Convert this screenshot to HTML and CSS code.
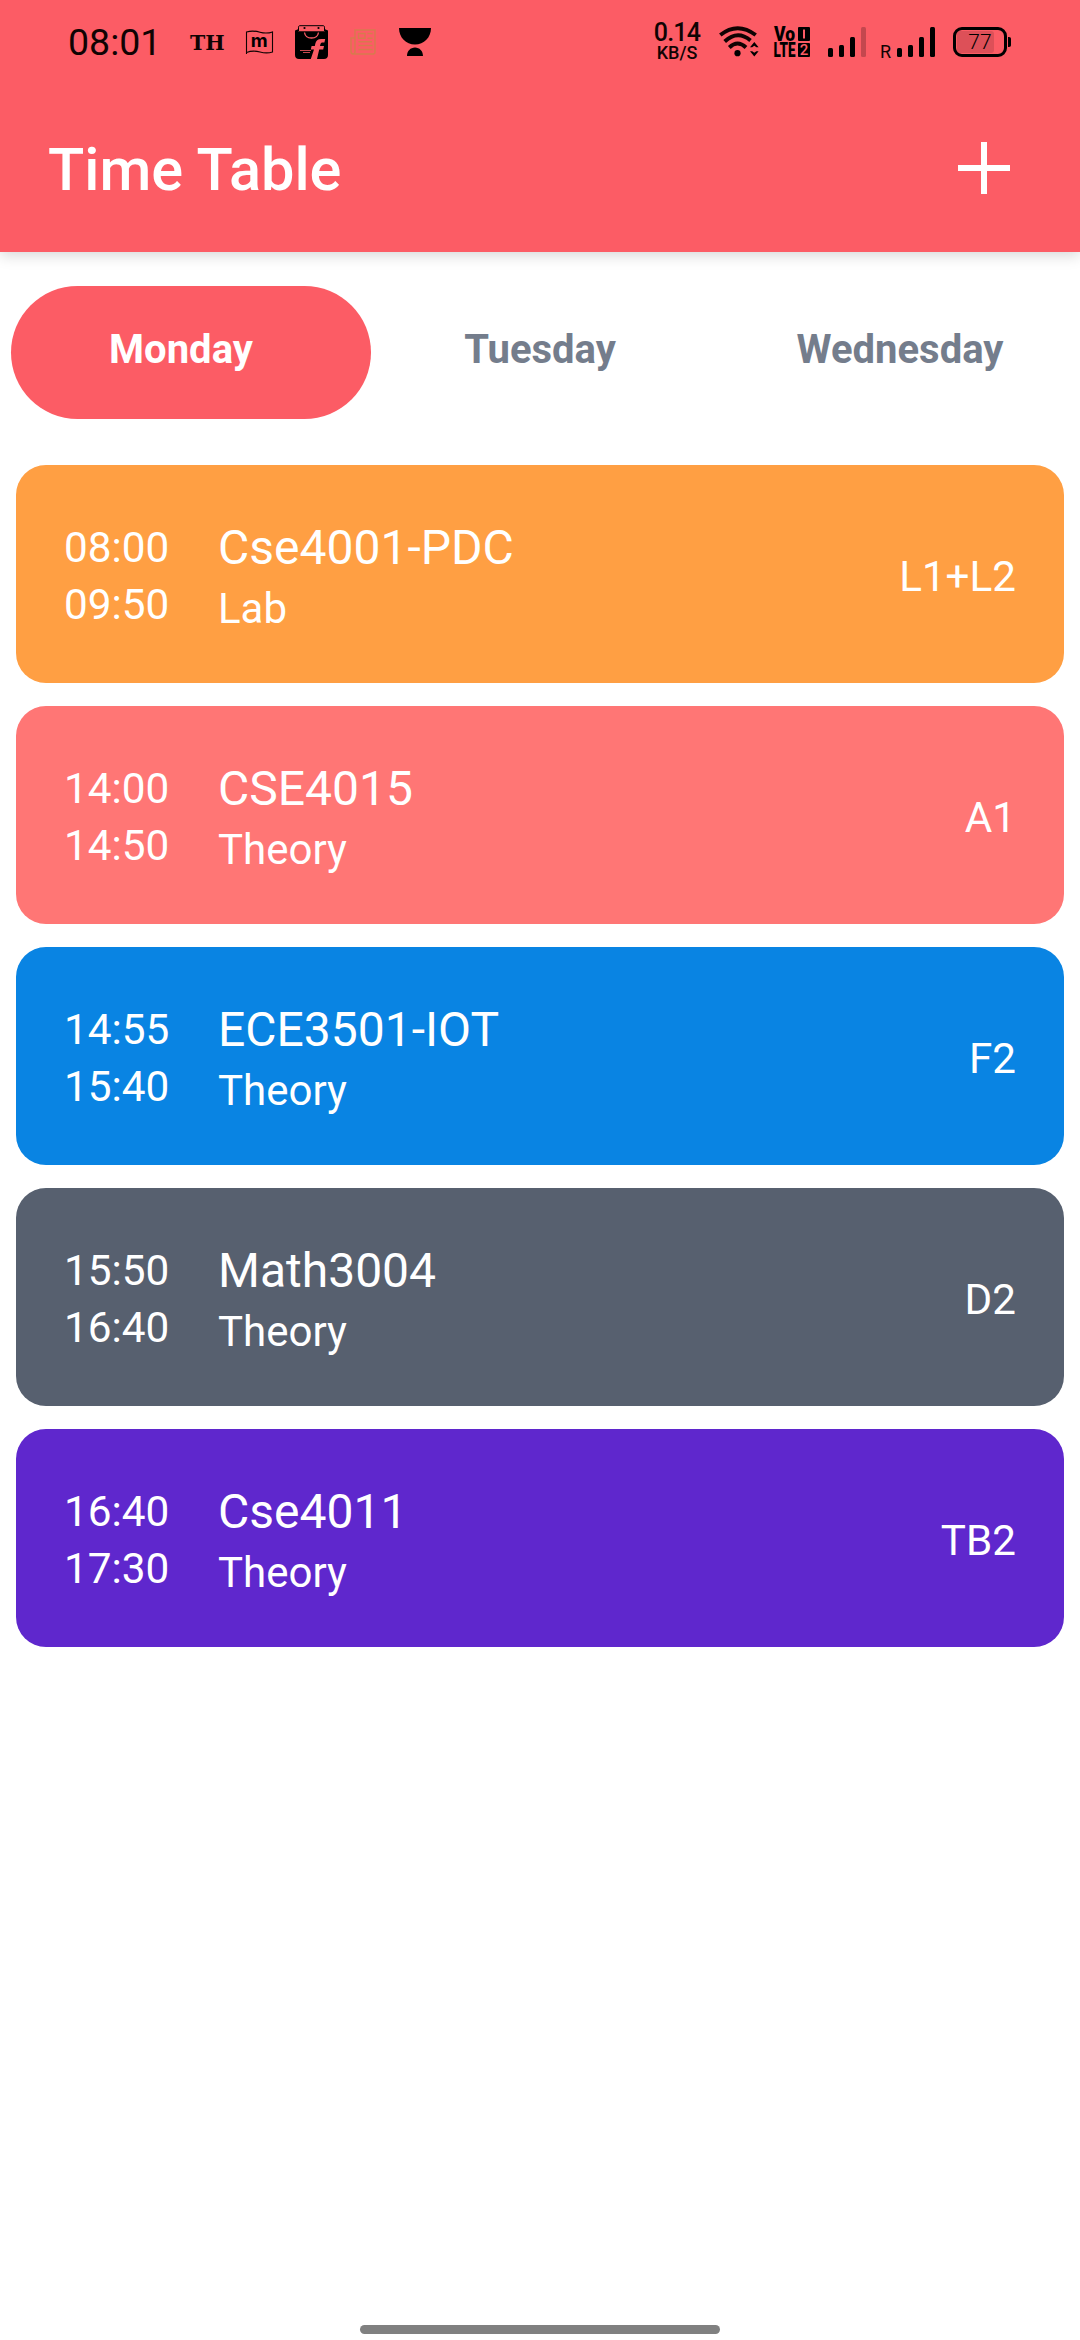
FILE: index.html
```html
<!DOCTYPE html>
<html lang="en">
<head>
<meta charset="utf-8">
<title>Time Table</title>
<link rel="stylesheet" href="styles.css">
</head>
<body>
<div class="screen">
  <header class="header">
    <div class="status">
      <div class="status-left">
        <span class="clock">08:01</span>
        <span class="th">TH</span>
        <svg class="flag" width="29" height="25" viewBox="0 0 29 25">
          <path d="M1.500 24V2C6 .6 10 .8 15 2.200s8 1.300 12.500-.3V22c-4.500 1.400-8 1.200-12.500 0S6 20.800 1.500 22.400" fill="none" stroke="#100303" stroke-width="1.100"/>
          <text x="14.300" y="17" text-anchor="middle" class="flag-m">m</text>
        </svg>
        <svg class="bag" width="33" height="34" viewBox="0 0 33 34">
          <path d="M3.500 6V2.200C3.500 1.200 4 .7 5 .7h23c1 0 1.500.5 1.500 1.500V6" fill="none" stroke="#000" stroke-width="1"/>
          <circle cx="9.500" cy="3" r="1.100"/><circle cx="23.500" cy="3" r="1.100"/>
          <path d="M0 5.500l3-1.200v1.900h27V4.300l3 1.200V30c0 2.500-1.500 4-4 4h-7l2.200-9.500h4l.8-3.500h-4l.4-1.700c.3-1.300 1-1.800 2.300-1.800h1.700l.8-3.500h-4c-3.500 0-5.200 1.700-5.900 4.700l-.5 2.300h-3.200l-.8 3.500h3.200L15.800 34H4c-2.500 0-4-1.500-4-4z"/>
          <path d="M9.500 7.500c.5 3.500 3.500 5.500 7 5.500s6.500-2 7-5.500" fill="none" stroke="#fc5c65" stroke-width="1.300"/>
          <path d="M5 25.500h11M8 27.500h7" stroke="#fc5c65" stroke-width=".8"/>
        </svg>
        <svg class="news" width="26" height="26" viewBox="0 0 26 26" fill="none" stroke="#d67b4d" stroke-width="1.400">
          <path d="M5 9H1v13.500C1 24.200 2 25 3.200 25H23c1.300 0 2-.8 2-2V1H5v21.500c0 1.500-.7 2.500-1.800 2.500"/>
          <path d="M8.500 4.500h6.500v4.800H8.500zM17.500 4.500h5M17.500 9.300h5M8.500 12.800h13.500M8.500 16.500h14M8.500 20.500h14"/>
        </svg>
        <svg class="cup" width="32" height="28" viewBox="0 0 32 28">
          <path d="M0 0h32c0 9.500-7 16.500-16 16.500S0 9.500 0 0zM8 28c0-5 3.500-8.500 8-8.500s8 3.500 8 8.500z"/>
        </svg>
      </div>
      <div class="status-right">
        <div class="speed"><span class="rate">0.14</span><span class="unit">KB/S</span></div>
        <svg class="wifi" width="41" height="31" viewBox="0 0 41 31">
          <g fill="none" stroke="#100303" stroke-width="3.900">
            <path d="M1.300 9Q18.500-4.700 36.700 9"/>
            <path d="M5.700 15.500Q18.500 3.700 31.500 14.500"/>
            <path d="M10.300 21.500Q18.500 13.500 27 21.500"/>
          </g>
          <circle cx="18.500" cy="27.200" r="3.100"/>
          <path d="M31 21.200l4.300-5.200 4.300 5.200h-2.200l-2.100-1.500-2.100 1.500zM31 25.200h2.200l2.100 1.500 2.100-1.500h2.200l-4.300 5.200z"/>
        </svg>
        <svg class="volte" width="36" height="30" viewBox="0 0 36 30">
          <text x="0" y="14" textLength="21" lengthAdjust="spacingAndGlyphs" class="volte-text">Vo</text>
          <text x="-.5" y="30" textLength="22" lengthAdjust="spacingAndGlyphs" class="volte-text">LTE</text>
          <rect x="24" width="12" height="14" rx="1"/><rect x="24" y="16" width="12" height="14" rx="1"/>
          <path d="M30 2.500v9" stroke="#fc5c65" stroke-width="2"/>
          <text x="30" y="27.900" text-anchor="middle" class="sim">2</text>
        </svg>
        <svg class="signal" width="38" height="30" viewBox="0 0 38 30">
          <rect y="21" width="5" height="9" rx="1.500"/><rect x="11" y="18" width="5" height="12" rx="1.500"/><rect x="22" y="10" width="5" height="20" rx="1.500"/><rect x="33" width="5" height="30" rx="1.500" opacity=".22"/>
        </svg>
        <span class="roaming">R</span>
        <svg class="signal-2" width="38" height="30" viewBox="0 0 38 30">
          <rect y="21" width="5" height="9" rx="1.500"/><rect x="11" y="18" width="5" height="12" rx="1.500"/><rect x="22" y="10" width="5" height="20" rx="1.500"/><rect x="33" width="5" height="30" rx="1.500"/>
        </svg>
        <svg class="battery" width="58" height="30" viewBox="0 0 58 30">
          <rect x="4" y="4" width="37" height="22" rx="3" opacity=".12"/>
          <rect x="1.500" y="1.500" width="51" height="27" rx="7.500" fill="none" stroke="#000" stroke-width="3"/>
          <path d="M55 10h1c1.300 0 2 .7 2 2v6c0 1.300-.7 2-2 2h-1z"/>
          <text x="27" y="22.300" text-anchor="middle" class="level">77</text>
        </svg>
      </div>
    </div>
    <div class="appbar">
      <h1 class="title">Time Table</h1>
      <svg class="add" width="52" height="52" viewBox="0 0 52 52"><path d="M26 0v52M0 26h52" stroke="#fff" stroke-width="6"/></svg>
    </div>
  </header>
  <nav class="tabs">
    <div class="tab active">Monday</div>
    <div class="tab">Tuesday</div>
    <div class="tab">Wednesday</div>
  </nav>
  <main class="list">
    <article class="card orange">
      <div class="times"><span>08:00</span><span>09:50</span></div>
      <div class="info"><span class="course">Cse4001-PDC</span><span class="kind">Lab</span></div>
      <div class="slot">L1+L2</div>
    </article>
    <article class="card coral">
      <div class="times"><span>14:00</span><span>14:50</span></div>
      <div class="info"><span class="course">CSE4015</span><span class="kind">Theory</span></div>
      <div class="slot">A1</div>
    </article>
    <article class="card blue">
      <div class="times"><span>14:55</span><span>15:40</span></div>
      <div class="info"><span class="course">ECE3501-IOT</span><span class="kind">Theory</span></div>
      <div class="slot">F2</div>
    </article>
    <article class="card slate">
      <div class="times"><span>15:50</span><span>16:40</span></div>
      <div class="info"><span class="course">Math3004</span><span class="kind">Theory</span></div>
      <div class="slot">D2</div>
    </article>
    <article class="card purple">
      <div class="times"><span>16:40</span><span>17:30</span></div>
      <div class="info"><span class="course">Cse4011</span><span class="kind">Theory</span></div>
      <div class="slot">TB2</div>
    </article>
  </main>
  <div class="home-bar"></div>
</div>
</body>
</html>
```

FILE: styles.css
```css
* { box-sizing: border-box; }
body { margin: 0; background: #fff; font-family: Roboto, sans-serif; }
.screen { width: 1080px; height: 2340px; display: flex; flex-direction: column; overflow: hidden; }
.header { height: 252px; flex: none; background: #fc5c65; box-shadow: 0 3px 14px rgba(0, 0, 0, .17); }

.status { height: 84px; display: flex; justify-content: space-between; padding: 0 69px 0 68px; color: #100303; }
.status svg { display: block; flex: none; overflow: visible; }
.status-left, .status-right { display: flex; align-items: flex-start; }
.clock { width: 91px; margin-top: 20px; font-size: 37.500px; line-height: 44px; white-space: nowrap; }
.th { width: 36px; margin: 31px 0 0 31px; font: bold 20.500px/24px "DejaVu Serif", serif; }
.flag { margin: 30px 0 0 19px; }
.flag-m { font: 700 18.500px Inter, sans-serif; }
.bag { margin: 25px 0 0 21px; }
.news { margin: 29px 0 0 22px; }
.cup { margin: 28px 0 0 23px; }

.speed { width: 46px; margin-top: 22px; display: flex; flex-direction: column; align-items: center; }
.rate { font-weight: 500; font-size: 25px; line-height: 22px; letter-spacing: -.8px; white-space: nowrap; }
.unit { font-weight: 500; font-size: 18px; line-height: 18px; white-space: nowrap; }
.wifi { margin: 26px 0 0 19px; }
.volte { margin: 27px 0 0 14px; }
.volte-text { font: 900 19.500px Roboto, sans-serif; }
.sim { font: 500 15px Roboto, sans-serif; fill: #fc5c65; }
.signal { margin: 27px 0 0 18px; }
.roaming { width: 12px; margin: 42px 0 0 14px; font-size: 18px; line-height: 20px; }
.signal-2 { margin: 27px 0 0 5px; }
.battery { margin: 27px 0 0 18px; }
.level { font: 300 21px Roboto, sans-serif; }

.appbar { height: 168px; display: flex; align-items: center; justify-content: space-between; padding: 0 70px 0 48px; }
.title { margin: 4px 0 0; color: #fff; font-size: 59.500px; line-height: 70px; font-weight: 500; }
.add { display: block; }

.tabs { flex: none; display: grid; grid-template-columns: repeat(3, 360px); margin-top: 34px; height: 133px; }
.tab { display: flex; align-items: center; justify-content: center; padding-bottom: 6px; color: #747d8c; font-size: 40px; font-weight: 700; }
.tab.active { margin: 0 -11px 0 11px; padding-right: 20px; border-radius: 67px; background: #fc5c65; color: #fff; }

.list { display: flex; flex-direction: column; gap: 23px; padding: 46px 16px 0; }
.card { height: 218px; display: flex; align-items: center; padding: 0 48px; border-radius: 30px; color: #fff; }
.times { width: 106px; margin-right: 48px; padding-top: 4px; display: flex; flex-direction: column; font-size: 42.300px; line-height: 57px; white-space: nowrap; }
.info { flex: 1; display: flex; flex-direction: column; padding-top: 4px; }
.course { font-size: 48px; line-height: 64px; }
.kind { font-size: 42px; line-height: 57px; }
.slot { padding-top: 4px; font-size: 42.200px; }
.orange { background: #ff9f43; }
.coral { background: #ff7675; }
.blue { background: #0984e3; }
.slate { background: #57606f; }
.purple { background: #5f27cd; }

.home-bar { width: 360px; height: 9px; margin: auto auto 6px; border-radius: 5px; background: #808080; }
```
